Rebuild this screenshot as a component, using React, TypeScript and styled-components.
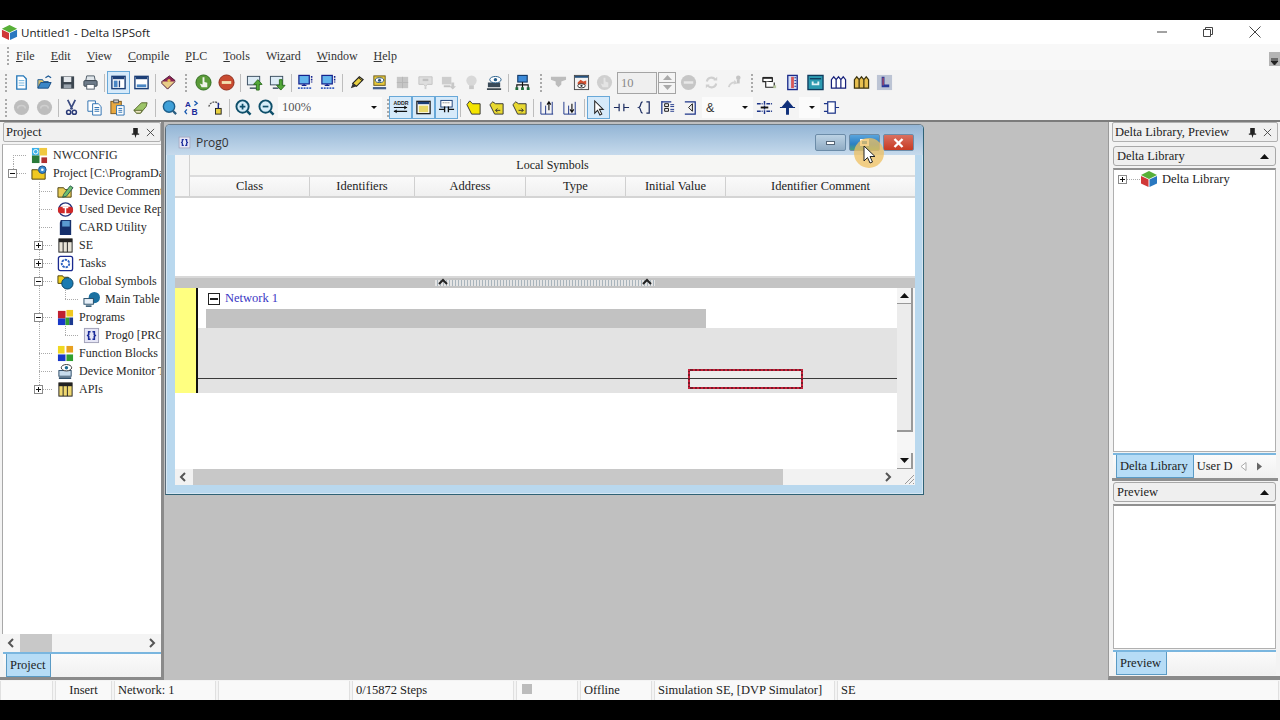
import React from "react";
import styled, { createGlobalStyle } from "styled-components";

const Global = createGlobalStyle`
	html, body { margin: 0; padding: 0; background: #000; }
	* { box-sizing: border-box; }
`;

const serif = `"Liberation Serif", "Times New Roman", serif`;
const sans = `"Open Sans", "Noto Sans", sans-serif`;

/* ================= icons ================ */

const folderBack = "M1 15V5h6l1.5 2H15v8z";
const icons: Record<string, React.ReactNode> = {
	newDoc: (<><path d="M4 2h7l3 3v11H4z" fill="#fff" stroke="#2477b8" strokeWidth="1.4" /><path d="M6 7h6M6 9.5h6M6 12h6" stroke="#6fb2dc" /></>),
	open: (<><path d="M2 15V6h5l1 2h5v2" fill="#d8c070" stroke="#1d5a96" /><path d="M2 15l3-6h11l-3 6z" fill="#3b86c6" stroke="#1a4f86" /><path d="M10 4l3-2 3 2" stroke="#1d5a96" fill="none" strokeWidth="1.3" /></>),
	save: (<><rect x="2" y="2.5" width="14" height="13" fill="#3c4650" /><rect x="5" y="3" width="8" height="5.5" fill="#e4e8ec" /><rect x="5" y="11" width="8" height="4" fill="#9aa4ae" /></>),
	print: (<><path d="M5 2h8l1 5H4z" fill="#dfe5ea" stroke="#4e5a66" /><rect x="2" y="7" width="14" height="6" rx="1" fill="#6e7c8a" stroke="#39444f" /><rect x="5" y="11" width="8" height="5" fill="#fff" stroke="#4e5a66" /></>),
	layoutA: (<><rect x="2" y="2.5" width="14" height="13" fill="#fff" stroke="#1c3f77" strokeWidth="1.5" /><rect x="3" y="3" width="12" height="2.5" fill="#1c3f77" /><rect x="4" y="7" width="4" height="7" fill="#4a86c4" /><path d="M10 7v7" stroke="#1c3f77" strokeWidth="1.4" /></>),
	layoutB: (<><rect x="2" y="2.5" width="14" height="13" fill="#fff" stroke="#1c3f77" strokeWidth="1.5" /><rect x="3" y="3" width="12" height="2.5" fill="#1c3f77" /><rect x="4" y="11" width="10" height="3" fill="#4a86c4" /></>),
	book: (<><path d="M2 8l8-6 6 5-8 8z" fill="#8c2252" stroke="#4e1433" /><path d="M2 8v2l6 6 8-8" fill="#e8cc88" stroke="#4e1433" /><circle cx="9.5" cy="7" r="1.6" fill="#e8c050" /></>),
	run: (<><circle cx="9" cy="9" r="8" fill="#5a9a38" stroke="#2f6c1f" /><path d="M8 3.5h2v5l3 .8V14H7l-2-4 3 1z" fill="#f0f2ea" /></>),
	stop: (<><circle cx="9" cy="9" r="8" fill="#c84a30" stroke="#8c2a18" /><rect x="4" y="7.5" width="10" height="3" fill="#f2e0b0" /></>),
	up: (<><rect x="1.5" y="2.5" width="13" height="9" fill="#dcebf5" stroke="#3a4e60" /><path d="M4 15h8" stroke="#3a4e60" strokeWidth="1.5" /><path d="M11 17V11H8l4.5-5L17 11h-3v6z" fill="#52a838" stroke="#2d6e1f" /></>),
	down: (<><rect x="1.5" y="2.5" width="13" height="9" fill="#dcebf5" stroke="#3a4e60" /><path d="M4 15h6" stroke="#3a4e60" strokeWidth="1.5" /><path d="M11 6v6H8l4.5 5 4.5-5h-3V6z" fill="#52a838" stroke="#2d6e1f" /></>),
	netUp: (<><rect x="2" y="1.5" width="11" height="9" fill="#62b4ec" stroke="#14228c" strokeWidth="1.3" /><path d="M5 12h5M7.5 10.5V12" stroke="#14228c" strokeWidth="1.3" /><path d="M15.5 2v7" stroke="#14228c" strokeWidth="1.6" strokeDasharray="2 1" /><path d="M1 15h15" stroke="#3a60c0" strokeWidth="2" strokeDasharray="2 1" /></>),
	pen: (<><path d="M5 10l7-7 4 3-7 7z" fill="#e8d040" stroke="#222" strokeWidth="1.2" /><path d="M3 15l2-5 4 3z" fill="#333" /><path d="M11 4l4 3" stroke="#222" /></>),
	eyeCard: (<><rect x="3" y="2" width="12" height="10" fill="#e8c838" stroke="#6a5a20" /><ellipse cx="9" cy="6.5" rx="4.5" ry="2.5" fill="#fff" stroke="#24507c" /><circle cx="9" cy="6.5" r="1.6" fill="#24507c" /><path d="M2 15h14" stroke="#46608c" strokeWidth="2.4" /></>),
	graySquare: (<><rect x="3" y="3" width="12" height="12" fill="#c6c6c6" /><path d="M3 9h12M9 3v12" stroke="#b6b6b6" /></>),
	grayChat: (<><path d="M2 3h14v8h-5l-2 2-2-2H2z" fill="#dedede" stroke="#c4c4c4" /><rect x="6" y="5" width="6" height="2.5" fill="#c0c0c0" /><path d="M8 13h2v3H8z" fill="#cfcfcf" /></>),
	grayDown: (<><rect x="2" y="3" width="10" height="8" fill="#cdcdcd" /><path d="M4 13h7" stroke="#c2c2c2" strokeWidth="2" /><path d="M12 9v4h-2l3.5 3.5L17 13h-2V9z" fill="#c8c8c8" /></>),
	grayBulb: (<><circle cx="9" cy="7" r="5.5" fill="#d8d8d8" /><rect x="6.5" y="12" width="5" height="4" fill="#c8c8c8" /></>),
	eyePc: (<><rect x="2" y="9" width="13" height="5" fill="#3a4a58" /><path d="M1 16h15" stroke="#1d2a34" strokeWidth="1.6" /><ellipse cx="10" cy="6" rx="6" ry="3.4" fill="#fff" stroke="#225a88" /><circle cx="10" cy="6" r="1.8" fill="#225a88" /></>),
	network: (<><rect x="4" y="1.5" width="10" height="7" fill="#3c8ad8" stroke="#123a6a" strokeWidth="1.2" /><path d="M9 8.5v3M3 15v-3.5h12V15M9 11.5V15" stroke="#111" fill="none" strokeWidth="1.2" /><path d="M1.500 14h3v3h-3zM7.500 14h3v3h-3zM13.500 14h3v3h-3z" fill="#1c6a3a" /></>),
	grayFunnel: (<path d="M1 3h16v3l-5 2v3l-3 3-3-3V8L1 6z" fill="#bcbcbc" />),
	viewEye: (<><rect x="1.500" y="1.500" width="15" height="15" fill="#f2f2f2" stroke="#4a4a4a" /><path d="M2 3h14" stroke="#24507c" strokeWidth="2" /><path d="M5 9l3-3 3 2 3-1v4H5z" fill="#d05030" /><ellipse cx="9" cy="12.500" rx="4" ry="2.200" fill="#fff" stroke="#333" /><circle cx="9" cy="12.500" r="1.200" fill="#333" /></>),
	grayRun: (<><circle cx="9" cy="9" r="8" fill="#cfcfcf" /><path d="M8 4h2v4l3 1v5H7l-2-4 3 1z" fill="#e4e4e4" /></>),
	grayStop: (<><circle cx="9" cy="9" r="8" fill="#c6c6c6" /><rect x="4" y="7.700" width="10" height="2.600" fill="#e8e8e8" /></>),
	grayCycle: (<><path d="M4 8a5 5 0 0 1 9-2M14 10a5 5 0 0 1-9 2" stroke="#cfcfcf" strokeWidth="2.200" fill="none" /><path d="M11 7h4V3zM7 11H3v4z" fill="#cfcfcf" /></>),
	grayStep: (<><path d="M3 14a6 6 0 0 1 7-5" stroke="#d2d2d2" strokeWidth="2" fill="none" /><path d="M9 6l3 4-4 1z" fill="#d2d2d2" /><circle cx="13" cy="4" r="2.400" fill="#c4c4c4" /><rect x="11.500" y="6" width="3" height="4" fill="#c4c4c4" /></>),
	tiles: (<><path d="M2 4h10v4H2z" fill="#fff" stroke="#222" strokeWidth="1.300" /><path d="M2 4h10" stroke="#222" strokeWidth="1.800" /><path d="M5 8v6h9V9" fill="#fff" stroke="#222" strokeWidth="1.200" /><rect x="13" y="12" width="3" height="3" fill="#b8c8a0" /></>),
	thermo: (<><rect x="4" y="1.500" width="10" height="15" fill="#d4e0f8" stroke="#1a2a8a" strokeWidth="1.400" /><rect x="7.500" y="3" width="3" height="12" fill="#d85858" /><path d="M11 4h2M11 7h2M11 10h2M11 13h2" stroke="#1a2a8a" /></>),
	panel: (<><rect x="1" y="1.500" width="16" height="15" fill="#2c9ab0" stroke="#0e3a5c" strokeWidth="1.400" /><path d="M3 5h12" stroke="#0e3a5c" strokeWidth="1.400" /><path d="M5 12V8h2v2h4V8h2v4z" fill="#dff2f6" /></>),
	triBlue: (<path d="M1.500 15V6l2.500-3 2.500 3v9zM6.500 15V6L9 3l2.500 3v9zM11.500 15V6L14 3l2.500 3v9z" fill="#fff" stroke="#16207a" strokeWidth="1.300" />),
	triGold: (<path d="M1.500 15V6l2.500-3 2.500 3v9zM6.500 15V6L9 3l2.500 3v9zM11.500 15V6L14 3l2.500 3v9z" fill="#e8c050" stroke="#3c3410" strokeWidth="1.300" />),
	chart: (<><rect x="1" y="1" width="16" height="16" fill="#bcc4d4" /><path d="M6 3v11h8v-3H9V3z" fill="#2a3a9a" /><rect x="7" y="4" width="1" height="8" fill="#e05050" /></>),
	undo: (<><circle cx="9" cy="9" r="8" fill="#bdbdbd" /><path d="M5 10a4 3 0 0 1 8 0" stroke="#cfcfcf" strokeWidth="1.600" fill="none" /></>),
	scissors: (<><path d="M5 1l5 10M13 1L8 11" stroke="#3a4a80" strokeWidth="1.800" /><circle cx="6" cy="14" r="2.200" fill="none" stroke="#2a3a78" strokeWidth="1.600" /><circle cx="12" cy="14" r="2.200" fill="none" stroke="#2a3a78" strokeWidth="1.600" /></>),
	copy: (<><path d="M2 2h8v11H2z" fill="#fff" stroke="#2a6fb0" /><path d="M7 5h6l3 3v9H7z" fill="#fff" stroke="#2a6fb0" /><path d="M9 9h5M9 11h5M9 13h5" stroke="#2a6fb0" /></>),
	paste: (<><rect x="2" y="2.500" width="11" height="13" fill="#e8a840" stroke="#7a5820" /><rect x="5" y="1" width="5" height="3" fill="#c8c8c8" stroke="#555" /><path d="M8 7h8v10H8z" fill="#fff" stroke="#2a6fb0" /><path d="M10 10h4M10 12h4M10 14h4" stroke="#2a6fb0" /></>),
	eraser: (<><path d="M2 12l8-8h6l-1 4-6 7H5z" fill="#9cc468" stroke="#5a6a30" /><path d="M2 12l3 3h4l2-3z" fill="#ece4c0" stroke="#5a6a30" /></>),
	find: (<><circle cx="8.500" cy="8" r="6" fill="#3fa0d8" stroke="#1d5f8c" strokeWidth="1.500" /><path d="M12.500 12.500l3.500 3.500" stroke="#2a5d80" strokeWidth="2.400" /></>),
	replace: (<><text x="1" y="8" fontSize="8.500" fontFamily="Liberation Sans" fontWeight="700" fill="#1a2a9a">A</text><text x="8" y="17" fontSize="9" fontFamily="Liberation Sans" fontWeight="700" fill="#1a2a9a">B</text><path d="M11 2l3 2.500-3 2.500M3 11l-2 2.500 2 2.500" stroke="#1a5ab0" strokeWidth="1.400" fill="none" /></>),
	gotoBm: (<><path d="M2 8a6 6 0 0 1 11-2" stroke="#555" strokeWidth="1.400" fill="none" strokeDasharray="2 1" /><rect x="9" y="10" width="6" height="6" fill="#e8d040" stroke="#222" /><path d="M12 4v6" stroke="#1a2a8a" strokeWidth="1.500" /></>),
	zoomIn: (<><circle cx="8" cy="8" r="6.500" fill="#d4ecf8" stroke="#0e4f6a" strokeWidth="2" /><path d="M5 8h6M8 5v6" stroke="#0e4f6a" strokeWidth="1.800" /><path d="M12.500 12.500l4 4" stroke="#0e4f6a" strokeWidth="2.600" /></>),
	zoomOut: (<><circle cx="8" cy="8" r="6.500" fill="#d4ecf8" stroke="#0e4f6a" strokeWidth="2" /><path d="M5 8h6" stroke="#0e4f6a" strokeWidth="1.800" /><path d="M12.500 12.500l4 4" stroke="#0e4f6a" strokeWidth="2.600" /></>),
	addr: (<><text x="1.500" y="6.500" fontSize="5.500" fontFamily="Liberation Sans" fontWeight="700" fill="#222">ADDR</text><path d="M2 9h14M2 13h14" stroke="#111" strokeWidth="1.300" /><path d="M13 7l3 2-3 2M5 11l-3 2 3 2" fill="#111" /></>),
	yellowWin: (<><rect x="2" y="2.500" width="14" height="13" fill="#fff" stroke="#222" strokeWidth="1.400" /><rect x="3" y="3" width="12" height="2.500" fill="#1c3f77" /><rect x="4" y="7" width="10" height="7" fill="#e8d868" /></>),
	ladderView: (<><rect x="3" y="1.500" width="12" height="7" fill="#fff" stroke="#1c3f77" /><path d="M5 4h8" stroke="#555" strokeDasharray="1 1" /><path d="M1 11h6M11 11h6M7 8v6M11 8v6" stroke="#111" strokeWidth="1.400" /></>),
	note: (<path d="M2 6l3-4 3 3h8v11H7z" fill="#f4e400" stroke="#333" />),
	noteL: (<><path d="M2 6l3-3 3 2h8v11H7z" fill="#e8d830" stroke="#333" /><path d="M13 12H8l2-2M8 12l2 2" stroke="#333" fill="none" /></>),
	noteR: (<><path d="M2 6l3-3 3 2h8v11H7z" fill="#e8d830" stroke="#333" /><path d="M8 12h5l-2-2M13 12l-2 2" stroke="#333" fill="none" /></>),
	netA: (<><path d="M2 16V3M7 16V7M14 16V3M2 16h13" stroke="#1c3488" fill="none" /><path d="M10.500 12V4M8.500 6l2-3 2 3" stroke="#111" fill="none" strokeWidth="1.200" /></>),
	netB: (<><path d="M2 16V3M7 16V7M14 16V3M2 16h13" stroke="#1c3488" fill="none" /><path d="M10.500 5v8M8.500 11l2 3 2-3" stroke="#111" fill="none" strokeWidth="1.200" /></>),
	pointer: (<path d="M5 2v13l3-3 2.500 5 2-1-2.500-5h4z" fill="#fff" stroke="#222" strokeWidth="1.100" />),
	contact: (<path d="M1 9h5M6.500 5v8M11.500 5v8M12 9h5" fill="none" stroke="#1c2c60" strokeWidth="1.300" />),
	coil: (<><path d="M7 3C4 3 6 8 3 9c3 1 1 6 4 6" fill="none" stroke="#1c2c60" strokeWidth="1.300" /><path d="M11 3h3v12h-3" fill="none" stroke="#1c2c60" strokeWidth="1.300" /></>),
	block: (<><path d="M3 2v14M3 3h10" stroke="#1c3488" strokeWidth="1.300" /><path d="M6 5h4v3H6zM6 10h4v3H6z" fill="none" stroke="#111" /><path d="M12 6h4M12 8h4M12 11h4M12 13h4" stroke="#1c3488" /></>),
	branch: (<><path d="M3 3h11v13H3" fill="none" stroke="#1c3488" strokeWidth="1.300" /><path d="M7 9l4-4M7 9l4 4M11 5v8" fill="none" stroke="#111" /></>),
	horiz: (<><path d="M1 5h6M11 5h6M1 13h6M11 13h6M9 2v14" stroke="#1c3488" strokeWidth="1.500" strokeDasharray="4 1" /><path d="M5 9h8" stroke="#111" strokeWidth="2" /></>),
	upArrow: (<path d="M9 2l-5 6h4v8h2V8h4zM1 9h16" stroke="#10307a" fill="#10307a" strokeWidth="1.100" />),
	bracket: (<><rect x="5" y="3" width="8" height="12" fill="#fff" stroke="#1c3488" strokeWidth="1.300" /><path d="M1 5h4M1 13h4M13 9h4" stroke="#1c3488" strokeWidth="1.300" /></>),

	nwconfig: (<><rect x="1" y="1" width="8" height="8" fill="#3cb0e8" /><rect x="9" y="1" width="8" height="8" fill="#f0c840" /><rect x="1" y="9" width="8" height="8" fill="#2a7a3a" /><rect x="11" y="11" width="6" height="6" fill="#b03030" /><circle cx="5" cy="5" r="2.400" fill="none" stroke="#fff" /></>),
	project: (<><path d={folderBack} fill="#f0c820" stroke="#4a4010" /><circle cx="12" cy="5" r="4" fill="#3a8ad0" stroke="#1a4a80" /><circle cx="12" cy="5" r="1.400" fill="#fff" /></>),
	comment: (<><path d={folderBack} fill="#e8cc58" stroke="#4a4010" /><path d="M7 12l7-9 3 2-7 9-4 1z" fill="#70c070" stroke="#2a5a50" /></>),
	used: (<><circle cx="9" cy="9" r="7" fill="#fff" stroke="#26327a" strokeWidth="1.500" /><rect x="1" y="6" width="16" height="7" rx="3" fill="#d02828" /><path d="M6 7h6M9 7v7" stroke="#fff" strokeWidth="1.600" /></>),
	card: (<><path d="M4 1h11v16H3V4z" fill="#16306c" /><rect x="5.500" y="2" width="8" height="6" fill="#5a9ad0" /></>),
	se: (<><rect x="2" y="2" width="14" height="14" fill="#e8e4d8" stroke="#222" /><rect x="2" y="2" width="14" height="3.500" fill="#222" /><path d="M6.500 5v11M11 5v11" stroke="#222" /></>),
	tasks: (<><rect x="1.500" y="1.500" width="15" height="15" rx="2" fill="#fff" stroke="#1a2a90" strokeWidth="1.400" /><circle cx="9" cy="9" r="4" fill="none" stroke="#2a60c0" strokeWidth="2" strokeDasharray="2.500 1" /></>),
	global: (<><path d="M1 11V3h5l1 1.500h5V11z" fill="#f0d020" stroke="#4a4010" /><circle cx="11" cy="11" r="6" fill="#1a7ab0" stroke="#0a4060" /></>),
	mainTable: (<><circle cx="12" cy="7" r="6" fill="#1a70a0" /><rect x="1" y="8" width="10" height="6" fill="#e8f0f8" stroke="#224a66" /><path d="M3 16h6" stroke="#224a66" strokeWidth="1.600" /></>),
	programs: (<><rect x="1" y="2" width="8" height="8" fill="#c02030" /><rect x="10" y="1" width="7" height="7" fill="#f0c820" /><rect x="1" y="10" width="8" height="7" fill="#1838c8" /><rect x="9" y="9" width="4" height="8" fill="#30a030" /><rect x="13" y="9" width="4" height="8" fill="#1c3a90" /></>),
	prog: (<><rect x="1.500" y="1.500" width="15" height="15" fill="#e6e6f6" stroke="#a0a0b8" /><path d="M8 5H6v3l-1 1 1 1v3h2M10 5h2v3l1 1-1 1v3h-2" fill="none" stroke="#1a2a9a" strokeWidth="1.700" /></>),
	fb: (<><rect x="1" y="1" width="7" height="8" fill="#f0d820" /><rect x="10" y="1" width="7" height="7" fill="#e8a020" /><rect x="1" y="10" width="8" height="7" fill="#1838c8" /><rect x="10" y="10" width="7" height="7" fill="#30a030" /></>),
	devMon: (<><rect x="2" y="8" width="13" height="6" fill="#c8dcec" stroke="#2a4a66" /><path d="M2 16h13" stroke="#2a4a66" strokeWidth="1.800" /><ellipse cx="10" cy="5" rx="5.500" ry="3.400" fill="#fff" stroke="#333" /><circle cx="10" cy="5" r="1.800" fill="#1a6a90" /></>),
	apis: (<><rect x="2" y="2" width="14" height="14" fill="#f0d870" stroke="#222" /><rect x="2" y="2" width="14" height="3.500" fill="#222" /><path d="M6.500 5v11M11 5v11" stroke="#222" /></>),
	cube: (<><path d="M9 1l8 4-8 4-8-4z" fill="#58b038" /><path d="M1 6l7.500 3.500V17L1 13.500z" fill="#d03838" /><path d="M17 6L9.500 9.500V17l7.500-3.500z" fill="#2a78c0" /></>),
};

const Glyph = styled.svg<{ $size?: number }>`
	width: ${({ $size }) => $size ?? 18}px;
	height: ${({ $size }) => $size ?? 18}px;
	flex: none;
	display: block;
`;

const Icon: React.FC<{ name: string; size?: number }> = ({ name, size }) => (
	<Glyph viewBox="0 0 18 18" $size={size}>
		{icons[name]}
	</Glyph>
);

/* ================= data ================ */

type Tool = string | { gap: number; kind?: "line" | "grip" };
const line = (gap: number): Tool => ({ gap, kind: "line" });
const grip = (gap: number): Tool => ({ gap, kind: "grip" });

const rowOne: Tool[] = [
	grip(10), "newDoc", "open", "save", "print", line(5), "*layoutA", "layoutB", line(4), "book",
	grip(12), "run", "stop", line(5), "up", "down", line(5), "netUp", "netUp", line(5),
	"pen", "eyeCard", "graySquare", "grayChat", "grayDown", "grayBulb", "eyePc", line(5), "network",
	grip(13), "grayFunnel", "viewEye", "grayRun",
];
const rowOneEnd: Tool[] = [
	"grayStop", "grayCycle", "grayStep", grip(12), "tiles", "thermo", "panel", "triBlue", "triGold", "chart",
];
const rowTwoA: Tool[] = [
	grip(10), "undo", "undo", line(4), "scissors", "copy", "paste", "eraser", line(6),
	"find", "replace", "gotoBm", line(5), "zoomIn", "zoomOut",
];
const rowTwoB: Tool[] = [
	grip(7), "*addr", "*yellowWin", "*ladderView", line(4), "note", "noteL", "noteR", line(5),
	"netA", "netB", line(5), "*pointer", "contact", "coil", "block", "branch",
];

type Node = { label: string; icon: string; guides: string[]; box?: "+" | "-" };
const tree: Node[] = [
	{ label: "NWCONFIG", icon: "nwconfig", guides: ["start"] },
	{ label: "Project [C:\\ProgramData", icon: "project", guides: ["last"], box: "-" },
	{ label: "Device Comment", icon: "comment", guides: ["", "tee"] },
	{ label: "Used Device Rep", icon: "used", guides: ["", "tee"] },
	{ label: "CARD Utility", icon: "card", guides: ["", "tee"] },
	{ label: "SE", icon: "se", guides: ["", "tee"], box: "+" },
	{ label: "Tasks", icon: "tasks", guides: ["", "tee"], box: "+" },
	{ label: "Global Symbols", icon: "global", guides: ["", "tee"], box: "-" },
	{ label: "Main Table", icon: "mainTable", guides: ["", "pass", "last"] },
	{ label: "Programs", icon: "programs", guides: ["", "tee"], box: "-" },
	{ label: "Prog0 [PRG", icon: "prog", guides: ["", "pass", "last"] },
	{ label: "Function Blocks", icon: "fb", guides: ["", "tee"] },
	{ label: "Device Monitor T", icon: "devMon", guides: ["", "tee"] },
	{ label: "APIs", icon: "apis", guides: ["", "last"], box: "+" },
];

const columns = [
	{ label: "Class", width: 120 },
	{ label: "Identifiers", width: 105 },
	{ label: "Address", width: 111 },
	{ label: "Type", width: 100 },
	{ label: "Initial Value", width: 100 },
	{ label: "Identifier Comment", width: 189 },
];

const menus: [string, string, string][] = [
	["", "F", "ile"], ["", "E", "dit"], ["", "V", "iew"], ["", "C", "ompile"], ["", "P", "LC"],
	["", "T", "ools"], ["Wi", "z", "ard"], ["", "W", "indow"], ["", "H", "elp"],
];

const statusCells = [
	{ width: 53, text: "" },
	{ width: 57, text: "Insert", center: true },
	{ width: 102, text: "Network: 1" },
	{ width: 132, text: "" },
	{ width: 162, text: "0/15872 Steps" },
	{ width: 62, text: "", lamp: true },
	{ width: 72, text: "Offline" },
	{ width: 181, text: "Simulation SE, [DVP Simulator]" },
	{ width: 442, text: "SE" },
];

const ToolRun: React.FC<{ tools: Tool[] }> = ({ tools }) => (
	<>
		{tools.map((t, i) => {
			if (typeof t !== "string") {
				return <Spacer key={i} $w={t.gap} $kind={t.kind} />;
			}
			const active = t.startsWith("*");
			return (
				<ToolBtn key={i} $active={active}>
					<Icon name={t.replace("*", "")} size={17} />
				</ToolBtn>
			);
		})}
	</>
);

const Chevron: React.FC<{ dir: "left" | "right" | "up" | "down"; color?: string }> = ({ dir, color }) => {
	const d = { left: "M6 1L2 5l4 4", right: "M3 1l4 4-4 4", up: "M1 6l4-4 4 4", down: "M1 3l4 4 4-4" }[dir];
	return (
		<Glyph viewBox="0 0 10 10" $size={10}>
			<path d={d} fill="none" stroke={color ?? "#555"} strokeWidth="2" />
		</Glyph>
	);
};

const Pin = () => (
	<Glyph viewBox="0 0 10 12" $size={11}>
		<path d="M2.500 1h5v6h1.500v1.500H6L5 12 4 8.500H1V7h1.500z" fill="#222" />
	</Glyph>
);

const Cross = () => (
	<Glyph viewBox="0 0 10 10" $size={9}>
		<path d="M1 1l8 8M9 1L1 9" stroke="#444" strokeWidth="1" />
	</Glyph>
);

const PaneHeader: React.FC<{ title: string }> = ({ title }) => (
	<PaneHead>
		<span>{title}</span>
		<PaneTools>
			<Pin />
			<Cross />
		</PaneTools>
	</PaneHead>
);

/* ================= page ================ */

const App: React.FC = () => (
	<Screen>
		<Global />
		<Frame>
			<TitleBar>
				<Icon name="cube" size={17} />
				<AppTitle>Untitled1 - Delta ISPSoft</AppTitle>
				<WinButtons>
					<WinBtn>
						<svg width="12" height="12" viewBox="0 0 12 12"><path d="M1 6h10" stroke="#444" /></svg>
					</WinBtn>
					<WinBtn>
						<svg width="12" height="12" viewBox="0 0 12 12"><path d="M1.500 3.500h7v7h-7zM3.500 3.500v-2h7v7h-2" fill="none" stroke="#444" /></svg>
					</WinBtn>
					<WinBtn>
						<svg width="12" height="12" viewBox="0 0 12 12"><path d="M.5.5l11 11M11.500.5l-11 11" stroke="#444" /></svg>
					</WinBtn>
				</WinButtons>
			</TitleBar>

			<MenuBar>
				<Spacer $w={16} $kind="grip" />
				{menus.map(([a, u, b]) => (
					<MenuItem key={u + b}>
						{a}
						<u>{u}</u>
						{b}
					</MenuItem>
				))}
				<MoreBtn>
					<svg width="9" height="9" viewBox="0 0 9 9"><path d="M1 2h7M1 4l3.500 4L8 4z" fill="#222" stroke="#222" /></svg>
				</MoreBtn>
			</MenuBar>

			<ToolRow>
				<ToolRun tools={rowOne} />
				<SpinBox>10</SpinBox>
				<Stepper>
					<StepHalf><svg width="9" height="5" viewBox="0 0 9 5"><path d="M4.500 0L9 5H0z" fill="#aaa" /></svg></StepHalf>
					<StepHalf><svg width="9" height="5" viewBox="0 0 9 5"><path d="M4.500 5L9 0H0z" fill="#aaa" /></svg></StepHalf>
				</Stepper>
				<Spacer $w={1} />
				<ToolRun tools={rowOneEnd} />
			</ToolRow>

			<ToolRow>
				<ToolRun tools={rowTwoA} />
				<Combo $w={104}>
					<span>100%</span>
					<DropMark />
				</Combo>
				<ToolRun tools={rowTwoB} />
				<Combo $w={51}>
					<Amp>&amp;</Amp>
					<DropMark />
				</Combo>
				<ToolBtn><Icon name="horiz" size={17} /></ToolBtn>
				<ToolBtn><Icon name="upArrow" size={17} /></ToolBtn>
				<Combo $w={21}>
					<span />
					<DropMark />
				</Combo>
				<ToolBtn><Icon name="bracket" size={17} /></ToolBtn>
			</ToolRow>

			<Workspace>
				<LeftPane>
					<PaneHeader title="Project" />
					<TreeBox>
						{tree.map((n) => (
							<TreeRow key={n.label}>
								{n.guides.map((g, i) => (
									<Guide key={i} $kind={g}>
										{i === n.guides.length - 1 && n.box && <Expander $sign={n.box} />}
									</Guide>
								))}
								<TreeIcon><Icon name={n.icon} size={17} /></TreeIcon>
								<TreeLabel>{n.label}</TreeLabel>
							</TreeRow>
						))}
					</TreeBox>
					<HBar>
						<Chevron dir="left" />
						<HTrack><HThumb $w={32} /></HTrack>
						<Chevron dir="right" />
					</HBar>
					<TabStrip>
						<Tab $active>Project</Tab>
					</TabStrip>
				</LeftPane>

				<MdiArea>
					<ChildWindow>
						<ChildTitle>
							<Icon name="prog" size={13} />
							<ChildName>Prog0</ChildName>
							<ChildButtons>
								<CapBtn $kind="min"><CapMark $w={9} /></CapBtn>
								<CapBtn $kind="max"><CapMark $w={9} $tall /></CapBtn>
								<CapBtn $kind="close">
									<svg width="11" height="10" viewBox="0 0 11 10"><path d="M1.500 1l8 8M9.500 1l-8 8" stroke="#fff" strokeWidth="2.400" /></svg>
								</CapBtn>
							</ChildButtons>
						</ChildTitle>

						<ChildBody>
							<SymbolHead>
								<Gutter />
								<HeadColumns>
									<GroupRow>Local Symbols</GroupRow>
									<ColumnRow>
										{columns.map((c) => (
											<ColumnCell key={c.label} $w={c.width}>{c.label}</ColumnCell>
										))}
									</ColumnRow>
								</HeadColumns>
							</SymbolHead>
							<SymbolBlank />
							<Splitter>
								<SplitGrip>
									<Chevron dir="up" color="#222" />
									<Chevron dir="up" color="#222" />
								</SplitGrip>
							</Splitter>
							<LadderPane>
								<LadderView>
									<Rung>
										<RungMark />
										<RungBody>
											<NetworkHead>
												<Collapse />
												<NetworkName>Network 1</NetworkName>
											</NetworkHead>
											<CommentBar />
											<RungArea>
												<Wire $w={490} />
												<CellSlot><CellWire /></CellSlot>
												<Wire />
											</RungArea>
										</RungBody>
									</Rung>
								</LadderView>
								<VBar>
									<VBtn><svg width="9" height="5" viewBox="0 0 9 5"><path d="M4.500 0L9 5H0z" fill="#111" /></svg></VBtn>
									<VThumb />
									<VRest />
									<VBtn><svg width="9" height="5" viewBox="0 0 9 5"><path d="M4.500 5L9 0H0z" fill="#111" /></svg></VBtn>
								</VBar>
							</LadderPane>
							<ChildHBar>
								<Chevron dir="left" />
								<HTrack><HThumb $w={590} /></HTrack>
								<Chevron dir="right" />
								<SizeGrip>
									<svg width="12" height="12" viewBox="0 0 12 12"><path d="M11 2l-9 9M11 6l-5 5M11 10l-1 1" stroke="#999" /></svg>
								</SizeGrip>
							</ChildHBar>
						</ChildBody>

						<CursorMark>
							<svg width="32" height="32" viewBox="0 0 32 32">
								<circle cx="16" cy="16" r="15" fill="#efc060" fillOpacity="0.75" />
								<path d="M11 9v15l3.500-3.500 2.500 5.500 2.500-1-2.500-5.500h5z" fill="#fff" stroke="#222" />
							</svg>
						</CursorMark>
					</ChildWindow>
				</MdiArea>

				<RightPane>
					<PaneHeader title="Delta Library, Preview" />
					<SubPane>
						<SubHead>
							<span>Delta Library</span>
							<svg width="9" height="5" viewBox="0 0 9 5"><path d="M4.500 0L9 5H0z" fill="#111" /></svg>
						</SubHead>
						<LibBox>
							<LibRow>
								<Expander $sign="+" $flow />
								<LibDash />
								<Icon name="cube" size={18} />
								<span>Delta Library</span>
							</LibRow>
						</LibBox>
						<TabStrip>
							<Tab $active>Delta Library</Tab>
							<Tab>User D</Tab>
							<TabArrows>
								<svg width="7" height="9" viewBox="0 0 7 9"><path d="M6 .5v8L1 4.500z" fill="#fff" stroke="#aaa" /></svg>
								<svg width="7" height="9" viewBox="0 0 7 9"><path d="M1 .5v8L6 4.500z" fill="#666" /></svg>
							</TabArrows>
						</TabStrip>
					</SubPane>
					<SubPane $small>
						<SubHead>
							<span>Preview</span>
							<svg width="9" height="5" viewBox="0 0 9 5"><path d="M4.500 0L9 5H0z" fill="#111" /></svg>
						</SubHead>
						<LibBox />
						<TabStrip>
							<Tab $active>Preview</Tab>
						</TabStrip>
					</SubPane>
				</RightPane>
			</Workspace>

			<StatusBar>
				{statusCells.map((c, i) => (
					<StatusCell key={i} $w={c.width} $center={c.center}>
						{c.lamp ? <Lamp /> : c.text}
					</StatusCell>
				))}
			</StatusBar>
		</Frame>
	</Screen>
);

export default App;

/* ================= styled ================ */

const Screen = styled.div`
	width: 1280px;
	height: 720px;
	padding: 20px 0;
	background: #000;
	overflow: hidden;
`;

const Frame = styled.div`
	height: 680px;
	display: flex;
	flex-direction: column;
	background: #f5f5f5;
	font-family: ${serif};
	font-size: 12.5px;
	color: #1c1c1c;
`;

const TitleBar = styled.div`
	height: 24px;
	flex: none;
	display: flex;
	align-items: center;
	padding-left: 1px;
	background: #fff;
`;

const AppTitle = styled.div`
	margin-left: 3px;
	font-family: ${sans};
	font-size: 11.6px;
	color: #222;
`;

const WinButtons = styled.div`
	display: flex;
	margin-left: auto;
	margin-right: 2px;
`;

const WinBtn = styled.div`
	width: 46.5px;
	height: 24px;
	display: flex;
	align-items: center;
	justify-content: center;
`;

const MenuBar = styled.div`
	height: 26px;
	flex: none;
	display: flex;
	align-items: center;
	padding-bottom: 2px;
	background: #f8f8f8;
`;

const MenuItem = styled.div`
	padding-right: 16px;
	font-size: 12px;
	color: #333;
`;

const MoreBtn = styled.div`
	margin-left: auto;
	align-self: flex-start;
	margin-top: 8px;
	width: 11px;
	height: 14px;
	background: #b4b4b4;
	display: flex;
	align-items: flex-end;
	justify-content: center;
`;

const ToolRow = styled.div`
	height: 25px;
	flex: none;
	display: flex;
	align-items: center;
	background: #f4f4f4;
`;

const Spacer = styled.div<{ $w: number; $kind?: "line" | "grip" }>`
	width: ${({ $w }) => $w}px;
	height: 20px;
	flex: none;
	background-repeat: no-repeat;
	background-image: ${({ $kind }) =>
		$kind === "line"
			? "linear-gradient(#bdbdbd, #bdbdbd)"
			: $kind === "grip"
				? "repeating-linear-gradient(#aaa 0 2px, transparent 2px 4px)"
				: "none"};
	background-size: ${({ $kind }) => ($kind === "line" ? "1px 18px" : "2px 18px")};
	background-position: ${({ $kind, $w }) => ($kind === "line" ? "center" : $w > 11 ? "center" : "5px center")};
`;

const ToolBtn = styled.div<{ $active?: boolean }>`
	width: 23px;
	height: 23px;
	flex: none;
	display: flex;
	align-items: center;
	justify-content: center;
	background: ${({ $active }) => ($active ? "#d6eafa" : "transparent")};
	border: 1px solid ${({ $active }) => ($active ? "#68a8d8" : "transparent")};
`;

const SpinBox = styled.div`
	width: 40px;
	height: 22px;
	margin-left: 1px;
	flex: none;
	border: 1px solid #a4a4a4;
	background: #efefef;
	color: #888;
	padding-left: 3px;
	line-height: 20px;
`;

const Stepper = styled.div`
	width: 18px;
	height: 22px;
	margin-left: 1px;
	flex: none;
	display: flex;
	flex-direction: column;
	border: 1px solid #a4a4a4;
`;

const StepHalf = styled.div`
	flex: 1;
	display: flex;
	align-items: center;
	justify-content: center;
	&:first-child {
		border-bottom: 1px solid #a4a4a4;
	}
`;

const Combo = styled.div<{ $w: number }>`
	width: ${({ $w }) => $w}px;
	height: 21px;
	flex: none;
	display: flex;
	align-items: center;
	justify-content: space-between;
	padding: 0 5px 0 4px;
	background: #fbfbfb;
	color: #555;
`;

const Amp = styled.span`
	font-family: "Liberation Sans", sans-serif;
	color: #333;
`;

const DropMark = styled.i`
	width: 0;
	height: 0;
	border: 3px solid transparent;
	border-top: 3px solid #111;
	border-bottom: 0;
`;

const Workspace = styled.div`
	flex: 1;
	min-height: 0;
	display: flex;
	border-top: 2px solid #7c7c7c;
`;

const LeftPane = styled.div`
	width: 164px;
	flex: none;
	display: flex;
	flex-direction: column;
	padding: 0 0 0 3px;
	background: #f3f3f3;
	border-right: 3px solid #8a8a8a;
	border-bottom: 3px solid #8a8a8a;
`;

const PaneHead = styled.div`
	height: 20px;
	flex: none;
	display: flex;
	align-items: center;
	justify-content: space-between;
	padding: 0 5px 0 2px;
	border: 1px solid #b0b0b0;
	border-radius: 2px;
	background: #f0f0f0;
	font-size: 12.5px;
`;

const PaneTools = styled.div`
	display: flex;
	align-items: center;
	gap: 5px;
`;

const TreeBox = styled.div`
	flex: 1;
	min-height: 0;
	margin: 2px 0 0 -1px;
	padding-top: 1px;
	background: #fff;
	border-left: 1px solid #a8a8a8;
	border-top: 1px solid #c8c8c8;
	overflow: hidden;
`;

const TreeRow = styled.div`
	height: 18px;
	display: flex;
	align-items: center;
	white-space: nowrap;
	margin-left: -3px;
`;

const dash = "repeating-linear-gradient(#aaa 0 1px, transparent 1px 2px)";
const dashH = "repeating-linear-gradient(90deg, #aaa 0 1px, transparent 1px 2px)";

const Guide = styled.div<{ $kind: string }>`
	width: 26px;
	height: 18px;
	flex: none;
	position: relative;
	background-repeat: no-repeat;
	background-image: ${({ $kind }) =>
		$kind === "pass" ? dash : $kind === "" ? "none" : `${dash}, ${dashH}`};
	background-size: ${({ $kind }) =>
		$kind === "pass" ? "1px 18px" : $kind === "tee" ? "1px 18px, 13px 1px" : "1px 9px, 13px 1px"};
	background-position: ${({ $kind }) =>
		$kind === "pass" ? "13px 0" : $kind === "start" ? "13px 9px, 13px 9px" : "13px 0, 13px 9px"};
`;

const Expander = styled.div<{ $sign: "+" | "-"; $flow?: boolean }>`
	width: 9px;
	height: 9px;
	background:
		linear-gradient(#111, #111) center / 5px 1px no-repeat,
		${({ $sign }) => ($sign === "+" ? "linear-gradient(#111, #111) center / 1px 5px no-repeat," : "")}
		#fff;
	border: 1px solid #8a8a8a;
	flex: none;
	${({ $flow }) =>
		$flow
			? ""
			: `
		position: absolute;
		left: 8px;
		top: 5px;
	`}
`;

const TreeIcon = styled.div`
	width: 26px;
	height: 18px;
	flex: none;
	display: flex;
	align-items: center;
	justify-content: center;
`;

const TreeLabel = styled.div`
	margin-left: 1px;
	font-size: 12px;
	color: #2a2a2a;
`;

const HBar = styled.div`
	height: 18px;
	flex: none;
	display: flex;
	align-items: center;
	padding: 0 4px 0 6px;
	gap: 3px;
	background: #f4f4f4;
	margin-left: -2px;
`;

const HTrack = styled.div`
	flex: 1;
	height: 100%;
	display: flex;
	align-items: stretch;
`;

const HThumb = styled.div<{ $w: number }>`
	width: ${({ $w }) => $w}px;
	background: #c8c8c8;
`;

const TabStrip = styled.div`
	height: 25px;
	flex: none;
	display: flex;
	align-items: stretch;
	padding-left: 3px;
	background: linear-gradient(#fbfbfb, #f0f0f0);
	border-top: 2px solid #7ab6df;
`;

const Tab = styled.div<{ $active?: boolean }>`
	padding: 0 ${({ $active }) => ($active ? "5px 0 3px" : "3px")};
	display: flex;
	align-items: center;
	font-size: 12.5px;
	background: ${({ $active }) => ($active ? "#b6dcf6" : "transparent")};
	border: ${({ $active }) => ($active ? "1px solid #5a9ac4" : "0")};
	border-top: 0;
`;

const TabArrows = styled.div`
	margin-left: auto;
	margin-right: 13px;
	display: flex;
	align-items: center;
	gap: 9px;
`;

const MdiArea = styled.div`
	flex: 1;
	min-width: 0;
	position: relative;
	background: #c0c0c0;
`;

const ChildWindow = styled.div`
	position: absolute;
	left: 1px;
	top: 2px;
	width: 759px;
	height: 371px;
	display: flex;
	flex-direction: column;
	padding: 0 8px 9px 9px;
	background: #b9d8ee;
	border: 1px solid #2f6276;
	border-left-color: #5c6c78;
	border-top-color: #6c7c88;
	border-radius: 5px 5px 0 0;
	box-shadow: inset 0 0 0 1px #d6e6f2;
`;

const ChildTitle = styled.div`
	height: 30px;
	flex: none;
	margin: 0 -8px 0 -9px;
	padding: 5px 9px 0 12px;
	display: flex;
	align-items: center;
	border-radius: 4px 4px 0 0;
	background: linear-gradient(#93b5d5, #c6daec);
`;

const ChildName = styled.div`
	margin-left: 5px;
	font-family: ${sans};
	font-size: 12px;
	color: #333;
`;

const ChildButtons = styled.div`
	margin-left: auto;
	display: flex;
	gap: 3px;
`;

const CapBtn = styled.div<{ $kind: "min" | "max" | "close" }>`
	width: 31px;
	height: 17px;
	display: flex;
	align-items: center;
	justify-content: center;
	border: 1px solid #6c8ca8;
	border-radius: 2px;
	background: ${({ $kind }) =>
		$kind === "close"
			? "linear-gradient(#d87060, #c83a22)"
			: $kind === "max"
				? "linear-gradient(#5aa4dc, #2a80c4 60%, #4aa07a)"
				: "linear-gradient(#bcd2e4, #90acc4)"};
`;

const CapMark = styled.div<{ $w: number; $tall?: boolean }>`
	width: ${({ $w }) => $w}px;
	height: ${({ $tall }) => ($tall ? "7px" : "4px")};
	background: ${({ $tall }) => ($tall ? "transparent" : "#fff")};
	border: ${({ $tall }) => ($tall ? "2px solid #fff" : "1px solid #567")};
`;

const ChildBody = styled.div`
	flex: 1;
	min-height: 0;
	display: flex;
	flex-direction: column;
	background: #fff;
`;

const SymbolHead = styled.div`
	height: 43px;
	flex: none;
	display: flex;
	border-bottom: 2px solid #d4d4d4;
	background: #f5f5f5;
`;

const Gutter = styled.div`
	width: 15px;
	flex: none;
	border-right: 1px solid #d0d0d0;
`;

const HeadColumns = styled.div`
	flex: 1;
	display: flex;
	flex-direction: column;
`;

const GroupRow = styled.div`
	height: 22px;
	display: flex;
	align-items: center;
	justify-content: center;
	background: #f6f6f4;
	border-bottom: 2px solid #dcdcdc;
	font-size: 12px;
`;

const ColumnRow = styled.div`
	flex: 1;
	display: flex;
	background: linear-gradient(#fafafa, #f0f0f0);
`;

const ColumnCell = styled.div<{ $w: number }>`
	width: ${({ $w }) => $w}px;
	flex: none;
	display: flex;
	align-items: center;
	justify-content: center;
	font-size: 12.5px;
	border-right: 1px solid #d0d0d0;
	&:last-child {
		border-right: 0;
		flex: 1;
	}
`;

const SymbolBlank = styled.div`
	height: 78px;
	flex: none;
	background: #fff;
`;

const Splitter = styled.div`
	height: 12px;
	flex: none;
	display: flex;
	align-items: center;
	padding-left: 260px;
	background: #c4c4c4;
	border-top: 2px solid #d8d8d8;
`;

const SplitGrip = styled.div`
	width: 220px;
	height: 6px;
	display: flex;
	align-items: center;
	justify-content: space-between;
	padding: 0 3px;
	background: repeating-linear-gradient(90deg, #e4e4e4 0 2px, #a8b4bc 2px 3px);
`;

const LadderPane = styled.div`
	height: 181px;
	flex: none;
	display: flex;
	background: #fff;
`;

const LadderView = styled.div`
	flex: 1;
	min-width: 0;
`;

const Rung = styled.div`
	height: 105px;
	display: flex;
`;

const RungMark = styled.div`
	width: 23px;
	flex: none;
	background: #ffff80;
	border-right: 2px solid #111;
`;

const RungBody = styled.div`
	flex: 1;
	min-width: 0;
	display: flex;
	flex-direction: column;
`;

const NetworkHead = styled.div`
	height: 21px;
	flex: none;
	display: flex;
	align-items: center;
	padding-left: 10px;
`;

const Collapse = styled.div`
	width: 12px;
	height: 12px;
	border: 1px solid #222;
	background: linear-gradient(#222, #222) center / 8px 2px no-repeat;
`;

const NetworkName = styled.div`
	margin-left: 5px;
	color: #3a36c4;
	font-size: 12.5px;
`;

const CommentBar = styled.div`
	width: 500px;
	height: 19px;
	flex: none;
	margin-left: 8px;
	background: #c2c2c2;
`;

const RungArea = styled.div`
	flex: 1;
	display: flex;
	align-items: center;
	padding-top: 36px;
	background: #e3e3e3;
`;

const Wire = styled.div<{ $w?: number }>`
	height: 1.5px;
	flex: ${({ $w }) => ($w ? `0 0 ${$w}px` : "1")};
	background: #3a3a3a;
`;

const CellSlot = styled.div`
	width: 115px;
	height: 20px;
	flex: none;
	display: flex;
	align-items: center;
	border: 2px dotted #c8203a;
	background: linear-gradient(#ececec, #ececec) padding-box, #7a1a28 border-box;
`;

const CellWire = styled.div`
	width: 100%;
	height: 1.5px;
	background: #3a3a3a;
`;

const VBar = styled.div`
	width: 18px;
	flex: none;
	display: flex;
	flex-direction: column;
	background: #f6f6f6;
	padding-right: 2px;
`;

const VBtn = styled.div`
	height: 16px;
	flex: none;
	display: flex;
	align-items: center;
	justify-content: center;
	background: #f4f4f4;
	border-right: 2px solid #999;
	border-bottom: 1px solid #999;
`;

const VThumb = styled.div`
	height: 128px;
	flex: none;
	background: #ececec;
	border-right: 2px solid #999;
	border-bottom: 2px solid #999;
`;

const VRest = styled.div`
	flex: 1;
`;

const ChildHBar = styled.div`
	flex: 1;
	display: flex;
	align-items: center;
	padding: 0 22px 0 4px;
	gap: 4px;
	background: #f2f2f2;
	position: relative;
`;

const SizeGrip = styled.div`
	position: absolute;
	right: 0;
	bottom: 0;
	width: 12px;
	height: 12px;
`;

const CursorMark = styled.div`
	position: absolute;
	left: 687px;
	top: 12px;
	width: 32px;
	height: 32px;
`;

const RightPane = styled.div`
	width: 172px;
	flex: none;
	display: flex;
	flex-direction: column;
	padding: 0 2px 0 3px;
	background: #f3f3f3;
	border-left: 1px solid #9a9a9a;
	border-bottom: 4px solid #8a8a8a;
`;

const SubPane = styled.div<{ $small?: boolean }>`
	display: flex;
	flex-direction: column;
	margin-top: ${({ $small }) => ($small ? "1px" : "4px")};
	height: ${({ $small }) => ($small ? "193px" : "335px")};
	padding: 0 2px 0 1px;
	border-bottom: ${({ $small }) => ($small ? "0" : "3px solid #909090")};
`;

const SubHead = styled.div`
	height: 20px;
	flex: none;
	display: flex;
	align-items: center;
	justify-content: space-between;
	padding: 0 6px 0 3px;
	border: 1px solid #a8a8a8;
	border-radius: 3px;
	background: #efefef;
	font-size: 12.5px;
`;

const LibBox = styled.div`
	flex: 1;
	min-height: 0;
	margin: 2px 0 1px;
	background: #fff;
	border: 1px solid #b0b0b0;
	border-top: 2px solid #909090;
`;

const LibRow = styled.div`
	height: 18px;
	display: flex;
	align-items: center;
	padding-left: 4px;
	font-size: 12.5px;
	span {
		margin-left: 4px;
	}
`;

const LibDash = styled.div`
	width: 13px;
	height: 1px;
	background: ${dashH};
`;

const StatusBar = styled.div`
	height: 20px;
	flex: none;
	display: flex;
	background: #f4f4f4;
	padding-top: 1px;
`;

const StatusCell = styled.div<{ $w: number; $center?: boolean }>`
	width: ${({ $w }) => $w}px;
	flex: none;
	display: flex;
	align-items: center;
	justify-content: ${({ $center }) => ($center ? "center" : "flex-start")};
	padding: 0 3px;
	margin-right: 2px;
	font-size: 12.5px;
	background: #f9f9f9;
	border-right: 1px solid #e0e0e0;
	border-left: 1px solid #e0e0e0;
`;

const Lamp = styled.div`
	width: 10px;
	height: 10px;
	margin-top: -3px;
	margin-left: 2px;
	background: #bcbcbc;
`;
